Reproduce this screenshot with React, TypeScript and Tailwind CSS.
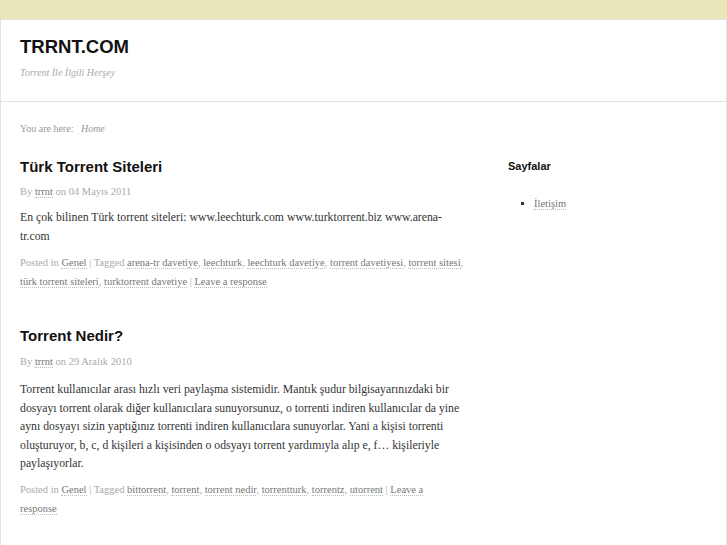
export default function App() {
  const link = "text-[#777] border-b border-dotted border-[#bbb]";
  return (
    <div className="min-h-[545px] bg-white font-['Liberation_Serif',serif]">
      <div className="h-[19px] bg-[#e9e7b9]" />
      <div className="border-x border-t border-[#e4e4e4] min-h-[526px]">
        {/* header */}
        <header className="h-[82px] border-b border-[#e2e2e2] px-[19px] pt-[16px]">
          <h1 className="font-['Liberation_Sans',sans-serif] text-[18.5px] leading-[22px] font-bold text-[#111]">
            TRRNT.COM
          </h1>
          <p className="mt-[8px] text-[10px] leading-[14px] italic text-[#aaa]">Torrent İle İlgili Herşey</p>
        </header>

        <div className="flex">
          <main className="w-[465px] pl-[19px] pt-[20px]">
            <p className="text-[10px] leading-[14px] text-[#999]">
              You are here:&nbsp;&nbsp; <span className="italic">Home</span>
            </p>

            <article className="mt-[21px]">
              <h2 className="font-['Liberation_Sans',sans-serif] text-[15px] leading-[20px] font-bold text-[#111]">
                Türk Torrent Siteleri
              </h2>
              <p className="mt-[7px] text-[10.5px] leading-[16px] text-[#aaa]">
                By <span className={link}>trrnt</span> on 04 Mayıs 2011
              </p>
              <p className="mt-[9px] text-[11.75px] leading-[18.5px] text-[#333]">
                En çok bilinen Türk torrent siteleri: www.leechturk.com www.turktorrent.biz www.arena-tr.com
              </p>
              <p className="mt-[7px] text-[10.5px] leading-[19px] text-[#aaa]">
                Posted in <span className={link}>Genel</span> | Tagged <span className={link}>arena-tr davetiye</span>,{" "}
                <span className={link}>leechturk</span>, <span className={link}>leechturk davetiye</span>,{" "}
                <span className={link}>torrent davetiyesi</span>, <span className={link}>torrent sitesi</span>,{" "}
                <span className={link}>türk torrent siteleri</span>, <span className={link}>turktorrent davetiye</span> |{" "}
                <span className={link}>Leave a response</span>
              </p>
            </article>

            <article className="mt-[35px]">
              <h2 className="font-['Liberation_Sans',sans-serif] text-[15px] leading-[20px] font-bold text-[#111]">
                Torrent Nedir?
              </h2>
              <p className="mt-[8px] text-[10.5px] leading-[16px] text-[#aaa]">
                By <span className={link}>trrnt</span> on 29 Aralık 2010
              </p>
              <p className="mt-[11px] text-[11.75px] leading-[18.5px] text-[#333]">
                Torrent kullanıcılar arası hızlı veri paylaşma sistemidir. Mantık şudur bilgisayarınızdaki bir dosyayı
                torrent olarak diğer kullanıcılara sunuyorsunuz, o torrenti indiren kullanıcılar da yine aynı dosyayı
                sizin yaptığınız torrenti indiren kullanıcılara sunuyorlar. Yani a kişisi torrenti oluşturuyor, b, c, d
                kişileri a kişisinden o odsyayı torrent yardımıyla alıp e, f… kişileriyle paylaşıyorlar.
              </p>
              <p className="mt-[6px] text-[10.5px] leading-[19px] text-[#aaa]">
                Posted in <span className={link}>Genel</span> | Tagged <span className={link}>bittorrent</span>,{" "}
                <span className={link}>torrent</span>, <span className={link}>torrent nedir</span>,{" "}
                <span className={link}>torrentturk</span>, <span className={link}>torrentz</span>,{" "}
                <span className={link}>utorrent</span> | <span className={link}>Leave a</span>
                <br />
                <span className={link}>response</span>
              </p>
            </article>
          </main>

          <aside className="ml-[42px] pt-[54px] w-[180px]">
            <h3 className="font-['Liberation_Sans',sans-serif] text-[11px] leading-[20px] font-bold text-[#111]">
              Sayfalar
            </h3>
            <ul className="mt-[20px] list-[square] pl-[26px] text-[10.5px] leading-[16px] text-[#333]">
              <li>
                <span className={link}>İletişim</span>
              </li>
            </ul>
          </aside>
        </div>
      </div>
    </div>
  );
}
